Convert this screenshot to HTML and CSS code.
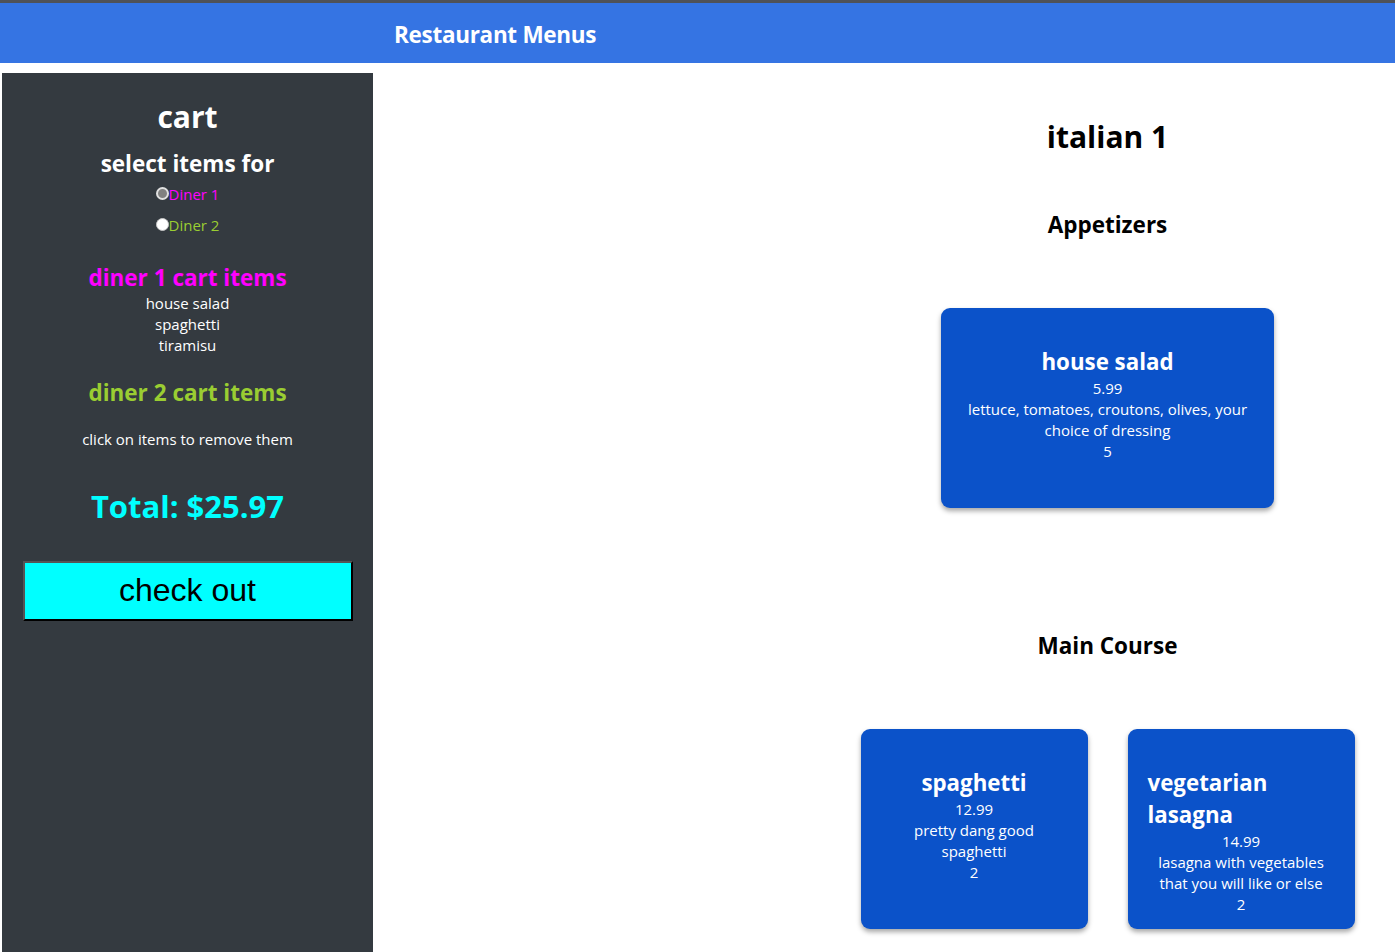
FILE: index.html
```html
<!DOCTYPE html>
<html>
<head>
<meta charset="utf-8">
<link rel="stylesheet" href="styles.css">
</head>
<body>
<header class="topbar">
  <h1 class="brand">Restaurant Menus</h1>
</header>
<div class="layout">
  <aside class="cart">
    <h2 class="cart-title">cart</h2>
    <h3 class="select-title">select items for</h3>
    <label class="radio-row diner1"><span class="radio checked"></span>Diner 1</label>
    <label class="radio-row diner2"><span class="radio"></span>Diner 2</label>
    <h3 class="list-title diner1-title">diner 1 cart items</h3>
    <ul class="items">
      <li>house salad</li>
      <li>spaghetti</li>
      <li>tiramisu</li>
    </ul>
    <h3 class="list-title diner2-title">diner 2 cart items</h3>
    <p class="hint">click on items to remove them</p>
    <h2 class="total">Total: $25.97</h2>
    <button class="checkout">check out</button>
  </aside>
  <main class="menu">
    <h1 class="rest-name">italian 1</h1>
    <h2 class="section-title appetizers">Appetizers</h2>
    <div class="cards">
      <div class="card wide">
        <h3 class="card-title">house salad</h3>
        <div class="card-text">5.99</div>
        <div class="card-text">lettuce, tomatoes, croutons, olives, your choice of dressing</div>
        <div class="card-text">5</div>
      </div>
    </div>
    <h2 class="section-title main-course">Main Course</h2>
    <div class="cards">
      <div class="card">
        <h3 class="card-title">spaghetti</h3>
        <div class="card-text">12.99</div>
        <div class="card-text">pretty dang good spaghetti</div>
        <div class="card-text">2</div>
      </div>
      <div class="card">
        <h3 class="card-title">vegetarian lasagna</h3>
        <div class="card-text">14.99</div>
        <div class="card-text">lasagna with vegetables that you will like or else</div>
        <div class="card-text">2</div>
      </div>
    </div>
  </main>
</div>
</body>
</html>
```

FILE: styles.css
```css
* { box-sizing: border-box; }
html, body { margin: 0; padding: 0; }
body {
  font-family: "Open Sans", "Noto Sans", sans-serif;
  background: #ffffff;
  color: #000;
  overflow: hidden;
  height: 952px;
}
.topbar {
  border-top: 3px solid #4f5258;
  background: #3574e3;
  height: 63px;
  display: flex;
  align-items: center;
  padding-left: 394px;
  padding-top: 3px;
}
.brand {
  margin: 0;
  color: #fff;
  font-size: 22.5px;
  font-weight: 700;
  letter-spacing: -0.3px;
}
.layout {
  display: flex;
  align-items: flex-start;
}
.cart {
  margin-top: 10px;
  margin-left: 2px;
  width: 371px;
  height: 880px;
  background: #343a40;
  color: #fff;
  display: flex;
  flex-direction: column;
  align-items: center;
  text-align: center;
  padding-top: 24px;
}
.cart-title {
  margin: 0;
  font-size: 30px;
  line-height: 40px;
  font-weight: 700;
}
.select-title {
  margin: 12px 0 0;
  font-size: 22.5px;
  line-height: 30px;
  font-weight: 700;
}
.radio-row {
  display: flex;
  align-items: center;
  font-size: 15px;
  line-height: 20px;
  height: 31px;
}
.diner1 { color: #ff00ff; margin-top: -1px; }
.diner2 { color: #9acd32; }
.radio {
  width: 13px;
  height: 13px;
  border-radius: 50%;
  background: #fff;
  border: 1px solid #c8c8c8;
  display: inline-block;
}
.radio.checked {
  background: #808080;
  border: 2px solid #e0e0e0;
}
.list-title {
  margin: 0;
  font-size: 22.5px;
  line-height: 30px;
  font-weight: 700;
}
.diner1-title { color: #ff00ff; margin-top: 23px; }
.diner2-title { color: #9acd32; margin-top: 22px; }
.items {
  list-style: none;
  margin: 0;
  padding: 0;
  font-size: 15px;
  line-height: 21px;
}
.hint {
  margin: 21px 0 0;
  font-size: 15px;
  line-height: 20px;
}
.total {
  margin: 36px 0 0;
  color: #00ffff;
  font-size: 31px;
  line-height: 42px;
  font-weight: 700;
}
.checkout {
  margin-top: 34px;
  width: 330px;
  height: 60px;
  background: #00ffff;
  border: 2px solid;
  border-color: #555 #000 #000 #555;
  font-family: "Liberation Sans", Arial, sans-serif;
  font-size: 32px;
  color: #000;
  padding: 0 0 2px;
}
.menu {
  margin-left: auto;
  margin-right: 20px;
  width: 535px;
  display: flex;
  flex-direction: column;
  align-items: center;
  padding-top: 52px;
}
.rest-name {
  margin: 0;
  font-size: 30px;
  line-height: 44px;
  font-weight: 700;
}
.section-title {
  margin: 0;
  font-size: 22.5px;
  line-height: 30px;
  font-weight: 700;
}
.appetizers { margin-top: 51px; }
.main-course { margin-top: 123px; }
.cards {
  display: flex;
  gap: 40px;
  margin-top: 68px;
}
.card {
  width: 227px;
  height: 200px;
  background: #0b52c9;
  border-radius: 9px;
  box-shadow: 0 3px 5px rgba(0, 0, 0, 0.35);
  color: #fff;
  display: flex;
  flex-direction: column;
  align-items: center;
  padding: 38px 20px 20px;
}
.card.wide { width: 333px; }
.card-title {
  margin: 0;
  font-size: 22.3px;
  line-height: 32px;
  font-weight: 700;
  text-align: left;
}
.card-text {
  font-size: 15px;
  line-height: 21px;
  text-align: center;
}
```
